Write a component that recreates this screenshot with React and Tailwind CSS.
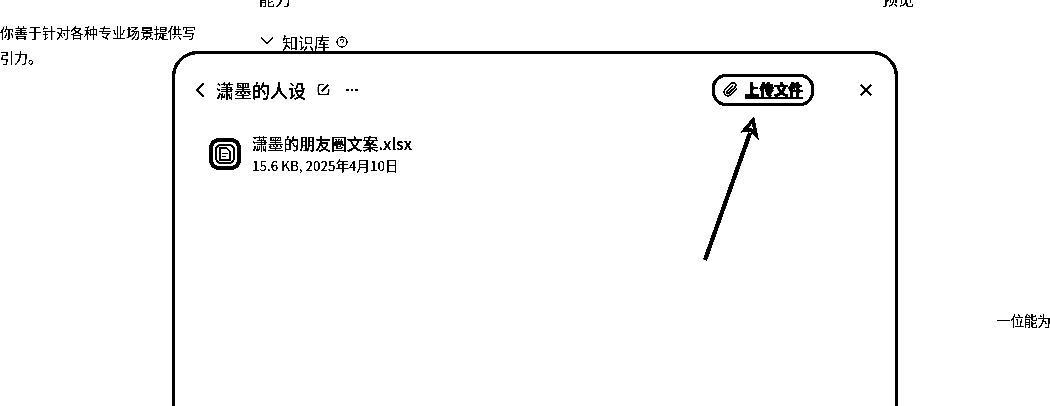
import React from "react";

const font = { fontFamily: '"Noto Sans CJK SC", "Noto Sans", sans-serif' };

function Background() {
  return (
    <div className="flex h-full w-full text-black">
      <div className="w-[258px] shrink-0 pt-[20px] text-[14px] leading-[25px]">
        <p className="w-[200px]">你善于针对各种专业场景提供写</p>
        <p>引力。</p>
      </div>
      <div className="flex-1">
        <div className="-mt-[14px] ml-[1px] text-[16px] leading-[24px]">能力</div>
        <div className="mt-[20px] flex items-center gap-[8px] pl-[2px] text-[16px] leading-[24px]">
          <svg width="14" height="14" viewBox="0 0 14 14" fill="none" stroke="black" strokeWidth="1.5" className="-mt-[3px]">
            <path d="M1 3.5 L7 9.5 L13 3.5" />
          </svg>
          <span>知识库</span>
          <svg width="12" height="12" viewBox="0 0 12 12" fill="none" stroke="black" strokeWidth="1" className="-ml-[2px]">
            <circle cx="6" cy="6" r="5" />
            <path d="M4.4 4.8 A1.6 1.6 0 1 1 6.6 6.2 L6 6.8 V7.4 M6 8.6 V9.4" />
          </svg>
        </div>
      </div>
      <div className="flex w-[168px] shrink-0 flex-col">
        <div className="-mt-[14px] text-[16px] leading-[24px]">预览</div>
        <div className="ml-[115px] mt-[300px] whitespace-nowrap text-[13.5px] leading-[20px]">一位能为</div>
      </div>
    </div>
  );
}

function Modal() {
  return (
    <div className="absolute left-[172px] top-[51px] h-[400px] w-[726px] rounded-[26px] border-[3px] border-black bg-white">
      <div className="mt-[15px] flex h-[41px] items-center justify-between pl-[19px] pr-[22px]">
        <div className="flex items-center">
          <svg width="12" height="16" viewBox="0 0 12 16" fill="none" stroke="black" strokeWidth="2.2">
            <path d="M9.5 1.5 L3 8 L9.5 14.5" />
          </svg>
          <span className="ml-[10px] text-[18px] font-medium leading-[24px]">潇墨的人设</span>
          <svg width="13" height="13" viewBox="0 0 14 14" fill="none" stroke="black" strokeWidth="1.6" className="ml-[11px]">
            <path d="M7.5 1.5 H4 A2.5 2.5 0 0 0 1.5 4 V10 A2.5 2.5 0 0 0 4 12.5 H10 A2.5 2.5 0 0 0 12.5 10 V6.5" />
            <path d="M5 9 L12 2" strokeWidth="2" />
          </svg>
          <svg width="12" height="4" viewBox="0 0 12 4" fill="black" className="ml-[16px]">
            <rect x="0.5" y="1" width="2" height="2" />
            <rect x="5" y="1" width="2" height="2" />
            <rect x="9.5" y="1" width="2" height="2" />
          </svg>
        </div>
        <div className="flex items-center">
          <button className="flex h-[32px] w-[102px] items-center gap-[6px] rounded-[14px] border-[3px] border-black bg-white pl-[7px]">
            <svg width="17" height="17" viewBox="0 0 24 24" fill="none" stroke="black" strokeWidth="2" className="shrink-0">
              <path d="M21 10.5 L11.5 20 A5.4 5.4 0 0 1 4 12.5 L13 3.5 A3.6 3.6 0 0 1 18.3 8.7 L9.5 17.3 A1.7 1.7 0 0 1 7 15 L15.5 6.5" />
            </svg>
            <span className="whitespace-nowrap border-b-2 border-black text-[14.5px] font-black leading-[16px] [-webkit-text-stroke:0.5px_black]">上传文件</span>
          </button>
          <svg width="14" height="14" viewBox="0 0 14 14" fill="none" stroke="black" strokeWidth="2.2" className="ml-[45px]">
            <path d="M2 2 L12 12 M12 2 L2 12" />
          </svg>
        </div>
      </div>
      <div className="ml-[34px] mt-[22px] flex items-center gap-[11px]">
        <div className="flex h-[32px] w-[32px] items-center justify-center rounded-[10px] border-[4px] border-black">
          <div className="flex h-[20px] w-[20px] items-center justify-center rounded-[6px] border-2 border-black">
            <svg width="12" height="14" viewBox="0 0 12 14" fill="none" stroke="black">
              <path strokeWidth="1.6" d="M1 1 H7.5 L11 4.5 V13 H1 Z" />
              <path strokeWidth="1.4" d="M3.5 6.5 H8.5 M3.5 9.5 H7" />
            </svg>
          </div>
        </div>
        <div>
          <div className="text-[15.8px] font-medium leading-[23px]">潇墨的朋友圈文案.xlsx</div>
          <div className="text-[13.5px] leading-[20px]">15.6 KB, 2025年4月10日</div>
        </div>
      </div>
    </div>
  );
}

function Arrow() {
  return (
    <svg width="70" height="150" viewBox="0 0 70 150" className="absolute left-[695px] top-[115px]" fill="none" stroke="black">
      <path d="M10 145 L55 18" strokeWidth="4" />
      <path d="M49 15.5 L58 5 L61 20 L56 15 Z" strokeWidth="3.4" />
    </svg>
  );
}

export default function App() {
  return (
    <div style={font} className="relative h-[406px] w-[1050px] overflow-hidden bg-white text-black brightness-[0.78] contrast-[20]">
      <Background />
      <Modal />
      <Arrow />
    </div>
  );
}
